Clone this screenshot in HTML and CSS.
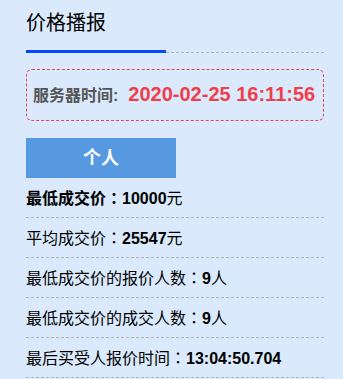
FILE: index.html
```html
<!DOCTYPE html>
<html lang="zh-CN">
<head>
<meta charset="utf-8">
<title>价格播报</title>
<link rel="stylesheet" href="styles.css">
</head>
<body>
<div class="page">
  <div class="header">
    <div class="title">价格播报</div>
    <div class="rest"></div>
  </div>
  <div class="server-box">
    <span class="server-label">服务器时间:</span><span class="server-time">2020-02-25 16:11:56</span>
  </div>
  <div class="tab">个人</div>
  <ul class="rows">
    <li class="row"><b>最低成交价<span class="colon" lang="ja">：</span>10000</b>元</li>
    <li class="row">平均成交价<span class="colon" lang="ja">：</span><b>25547</b>元</li>
    <li class="row">最低成交价的报价人数<span class="colon" lang="ja">：</span><b>9</b>人</li>
    <li class="row">最低成交价的成交人数<span class="colon" lang="ja">：</span><b>9</b>人</li>
    <li class="row">最后买受人报价时间<span class="colon" lang="ja">：</span><b>13:04:50.704</b></li>
  </ul>
</div>
</body>
</html>
```

FILE: styles.css
```css
html, body {
  margin: 0;
  padding: 0;
  background: #daeafc;
}
body {
  font-family: "Liberation Sans", "Noto Sans CJK SC", sans-serif;
  color: #000;
  overflow: hidden;
}
.page {
  width: 298px;
  margin-left: 26px;
}
.header {
  display: flex;
  align-items: flex-end;
}
.title {
  width: 140px;
  padding-top: 8px;
  padding-bottom: 12px;
  font-size: 20px;
  line-height: 30px;
  border-bottom: 3px solid #0049ff;
}
.rest {
  flex: 1;
  border-bottom: 1px dashed #b4b4b4;
}
.server-box {
  margin-top: 16px;
  padding: 12px 6px;
  border: 1px dashed #e8434f;
  border-radius: 6px;
  line-height: 25px;
  white-space: nowrap;
}
.server-label {
  font-size: 16px;
  font-weight: bold;
  color: #555;
}
.server-time {
  margin-left: 10px;
  font-size: 20px;
  font-weight: bold;
  color: #ee3e4a;
}
.tab {
  margin-top: 17px;
  width: 150px;
  height: 40px;
  line-height: 40px;
  text-align: center;
  background: #5799e0;
  color: #fff;
  font-size: 18px;
  font-weight: bold;
}
.rows {
  list-style: none;
  margin: 0;
  padding: 0;
}
.row {
  height: 39px;
  line-height: 39px;
  font-size: 16px;
  border-bottom: 1px dashed #b4b4b4;
  white-space: nowrap;
}
.colon {
  font-family: "Noto Sans CJK JP", sans-serif;
}
```
